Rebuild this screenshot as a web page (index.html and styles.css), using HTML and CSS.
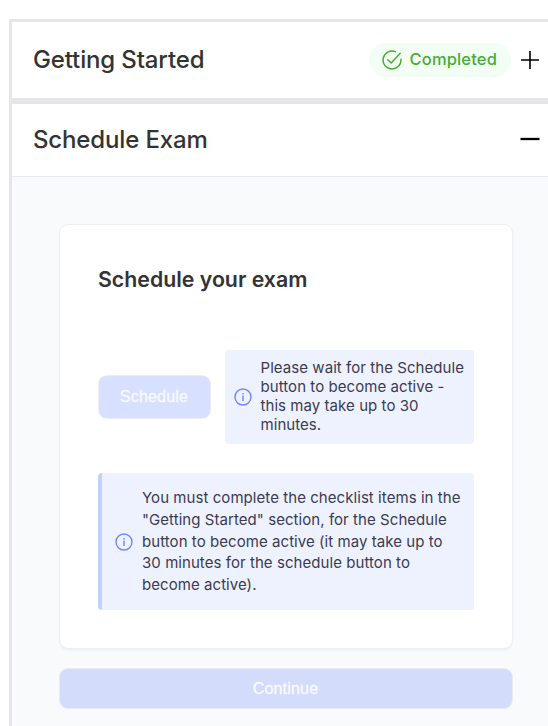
FILE: index.html
```html
<!DOCTYPE html>
<html lang="en">
<head>
<meta charset="utf-8">
<title>Schedule Exam</title>
<link rel="stylesheet" href="styles.css">
</head>
<body>
<main class="accordion">
  <section class="panel">
    <header class="panel-header first">
      <h2>Getting Started</h2>
      <span class="badge">
        <svg width="20" height="20" viewBox="0 0 20 20" fill="none" stroke="currentColor" stroke-width="1.5" stroke-linecap="round" stroke-linejoin="round"><path d="M19 9.2A9 9 0 1 1 13.3 1.6"/><path d="M5.7 9.8l3.5 3.2L18.2 3.3"/></svg>
        <span class="badge-label">Completed</span>
      </span>
      <svg class="toggle" width="20" height="20" viewBox="0 0 20 20" stroke="#000" stroke-width="1.6"><path d="M1 10h18M10 1v18"/></svg>
    </header>
  </section>
  <section class="panel open">
    <header class="panel-header second">
      <h2>Schedule Exam</h2>
      <svg class="toggle minus" width="20" height="20" viewBox="0 0 20 20" stroke="#000" stroke-width="2.3"><path d="M.5 10h19"/></svg>
    </header>
    <div class="panel-body">
      <div class="card">
        <h3>Schedule your exam</h3>
        <div class="action">
          <button class="btn schedule" disabled>Schedule</button>
          <div class="notice">
            <svg class="info" width="18" height="18" viewBox="0 0 18 18" fill="none" stroke="#7086fd" stroke-width="1.4"><circle cx="9" cy="9" r="8"/><path d="M9 7.5v5.4M9 4.9v1.5"/></svg>
            <p>Please wait for the Schedule button to become active - this may take up to 30 minutes.</p>
          </div>
        </div>
        <div class="alert">
          <svg class="info" width="18" height="18" viewBox="0 0 18 18" fill="none" stroke="#7086fd" stroke-width="1.4"><circle cx="9" cy="9" r="8"/><path d="M9 7.5v5.4M9 4.9v1.5"/></svg>
          <p>You must complete the checklist items in the "Getting Started" section, for the Schedule button to become active (it may take up to 30 minutes for the schedule button to become active).</p>
        </div>
      </div>
      <button class="btn continue" disabled>Continue</button>
    </div>
  </section>
</main>
</body>
</html>
```
FILE: styles.css
```css
* { box-sizing: border-box; }
body {
  margin: 0;
  background: #fff;
  color: #333;
  font-family: Inter, "Liberation Sans", sans-serif;
}
h2, h3, p { margin: 0; }
.accordion {
  display: flex;
  flex-direction: column;
  height: 726px;
  padding: 19px 0 0 9px;
}
.panel {
  border: solid #e6e5eb;
  border-width: 3px 0 3px 3px;
}
.open {
  display: flex;
  flex: 1;
  flex-direction: column;
  border-bottom: 0;
}
.panel-header {
  display: flex;
  align-items: center;
  padding: 0 8px 0 21px;
}
.first { height: 76px; }
.second {
  height: 73px;
  border-bottom: 1px solid #e8e9ed;
}
h2 {
  flex: 1;
  font-size: 24px;
  line-height: 32px;
  font-weight: 540;
  letter-spacing: -0.14px;
}
.badge {
  display: flex;
  align-items: center;
  gap: 8px;
  height: 34px;
  margin-right: 9px;
  padding: 0 14px 0 13px;
  border-radius: 17px;
  background: #f2fef4;
  color: #4bab34;
  font-size: 16.5px;
  font-weight: 520;
  letter-spacing: 0.15px;
}
.badge-label { padding-bottom: 2px; }
.toggle { flex: none; }
.minus { margin-bottom: 3px; }
.panel-body {
  flex: 1;
  padding: 48px 36px 0 48px;
  background: #f9fafc;
}
.card {
  height: 423px;
  padding: 36px 38px 0;
  border-radius: 8px;
  background: #fff;
  box-shadow: 0 0 0 1px #eceef1, 0 2px 3px #e9ebee;
}
h3 {
  font-size: 21.3px;
  line-height: 36px;
  font-weight: 590;
}
.action {
  display: flex;
  align-items: center;
  gap: 15px;
  margin-top: 53px;
}
.btn {
  border: 0;
  border-radius: 8px;
  padding: 0 1px 0 0;
  color: #f9faff;
  font: 16px "Liberation Sans", sans-serif;
  letter-spacing: 0.2px;
  -webkit-text-stroke: 0.3px #f9faff;
}
.schedule {
  width: 111px;
  height: 42px;
  margin-left: 1px;
  background: #d8e0ff;
  box-shadow: 0 0 0 1px #ececf6;
}
.notice, .alert {
  display: flex;
  align-items: center;
  background: #eef2ff;
  border-radius: 4px;
  color: #3b3b52;
  font-size: 15px;
  letter-spacing: 0.06px;
}
.notice {
  width: 249px;
  height: 94px;
  padding: 0 8px 0 9px;
  gap: 8.5px;
  line-height: 19px;
}
.notice p { padding-bottom: 2px; }
.alert {
  height: 137px;
  margin-top: 29px;
  padding: 0 12px 0 13px;
  gap: 9px;
  border-left: 4px solid #c0d0ff;
  line-height: 21.75px;
}
.info { flex: none; }
.continue {
  display: block;
  width: 100%;
  height: 39px;
  margin-top: 21px;
  background: #d4dcfc;
  box-shadow: 0 0 0 1px #e9ebf1;
}
```
